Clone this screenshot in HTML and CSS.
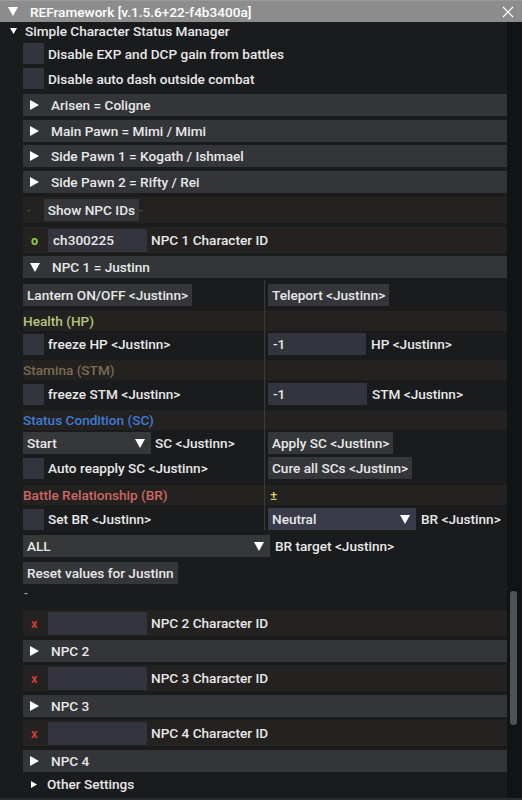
FILE: index.html
```html
<!DOCTYPE html>
<html lang="en">
<head>
    <meta charset="UTF-8">
    <meta name="viewport" content="width=device-width, initial-scale=1.0">
    <title>REFramework</title>
    <link rel="stylesheet" href="styles.css">
</head>
<body>
<div class="window">

    <!-- title bar -->
    <div class="titlebar">
        <svg class="title-arrow" width="10" height="9" viewBox="0 0 10 9"><polygon points="0,0 10,0 5,9"/></svg>
        <span class="title">REFramework [v.1.5.6+22-f4b3400a]</span>
        <svg class="close" width="12" height="12" viewBox="0 0 12 12"><path d="M1 1 L11 11 M11 1 L1 11"/></svg>
    </div>

    <div class="body">
        <div class="content">

            <div class="section-head">
                <svg width="7" height="6" viewBox="0 0 7 6"><polygon points="0,0 7,0 3.5,6"/></svg>
                <span>Simple Character Status Manager</span>
            </div>

            <div class="inner">
                <div class="check-row r-cb1"><span class="cb"></span><span>Disable EXP and DCP gain from battles</span></div>
                <div class="check-row r-cb2"><span class="cb"></span><span>Disable auto dash outside combat</span></div>

                <div class="node r-arisen"><svg class="tri" width="9" height="10" viewBox="0 0 9 10"><polygon points="0,0 9,5 0,10"/></svg><span>Arisen = Coligne</span></div>
                <div class="node r-main"><svg class="tri" width="9" height="10" viewBox="0 0 9 10"><polygon points="0,0 9,5 0,10"/></svg><span>Main Pawn = Mimi / Mimi</span></div>
                <div class="node r-side1"><svg class="tri" width="9" height="10" viewBox="0 0 9 10"><polygon points="0,0 9,5 0,10"/></svg><span>Side Pawn 1 = Kogath / Ishmael</span></div>
                <div class="node r-side2"><svg class="tri" width="9" height="10" viewBox="0 0 9 10"><polygon points="0,0 9,5 0,10"/></svg><span>Side Pawn 2 = Rifty / Rei</span></div>

                <div class="band r-show">
                    <span class="dim-dash first">-</span>
                    <span class="btn">Show NPC IDs</span>
                    <span class="dim-dash">-</span>
                </div>

                <div class="band id-row r-id1">
                    <span class="mark ok">o</span>
                    <span class="input id-input">ch300225</span>
                    <span>NPC 1 Character ID</span>
                </div>

                <div class="node r-npc1"><svg class="tri" width="10" height="9" viewBox="0 0 10 9"><polygon points="0,0 10,0 5,9"/></svg><span>NPC 1 = Justinn</span></div>

                <!-- two columns -->
                <div class="columns">
                    <div class="cell row-1"><span class="btn">Lantern ON/OFF &lt;Justinn&gt;</span></div>
                    <div class="cell right row-1"><span class="btn">Teleport &lt;Justinn&gt;</span></div>

                    <div class="cell band-cell row-gap5 hp">Health (HP)</div>
                    <div class="cell right band-cell row-gap5"></div>

                    <div class="cell row-2"><span class="cb"></span><span>freeze HP &lt;Justinn&gt;</span></div>
                    <div class="cell right row-2"><span class="input num">-1</span><span>HP &lt;Justinn&gt;</span></div>

                    <div class="cell band-cell row-gap5 stm">Stamina (STM)</div>
                    <div class="cell right band-cell row-gap5"></div>

                    <div class="cell row-3"><span class="cb"></span><span>freeze STM &lt;Justinn&gt;</span></div>
                    <div class="cell right row-3"><span class="input num num-stm">-1</span><span>STM &lt;Justinn&gt;</span></div>

                    <div class="cell band-cell row-gap5 sc">Status Condition (SC)</div>
                    <div class="cell right band-cell row-gap5"></div>

                    <div class="cell row-2">
                        <span class="combo combo-start"><span class="val">Start</span><svg width="10" height="9" viewBox="0 0 10 9"><polygon points="0,0 10,0 5,9"/></svg></span>
                        <span>SC &lt;Justinn&gt;</span>
                    </div>
                    <div class="cell right row-2"><span class="btn">Apply SC &lt;Justinn&gt;</span></div>

                    <div class="cell row-3"><span class="cb"></span><span>Auto reapply SC &lt;Justinn&gt;</span></div>
                    <div class="cell right row-3"><span class="btn">Cure all SCs &lt;Justinn&gt;</span></div>

                    <div class="cell band-cell row-gap6 br">Battle Relationship (BR)</div>
                    <div class="cell right band-cell row-gap6"><span class="pm">±</span></div>

                    <div class="cell row-3"><span class="cb"></span><span>Set BR &lt;Justinn&gt;</span></div>
                    <div class="cell right row-3">
                        <span class="combo combo-neutral"><span class="val">Neutral</span><svg width="10" height="9" viewBox="0 0 10 9"><polygon points="0,0 10,0 5,9"/></svg></span>
                        <span>BR &lt;Justinn&gt;</span>
                    </div>
                </div>

                <div class="line r-all">
                    <span class="combo combo-all"><span class="val">ALL</span><svg width="10" height="9" viewBox="0 0 10 9"><polygon points="0,0 10,0 5,9"/></svg></span>
                    <span>BR target &lt;Justinn&gt;</span>
                </div>

                <div class="line r-reset"><span class="btn">Reset values for Justinn</span></div>

                <div class="sep-dash">-</div>

                <div class="band id-row r-id2">
                    <span class="mark bad">x</span>
                    <span class="input id-input"></span>
                    <span>NPC 2 Character ID</span>
                </div>
                <div class="node r-npc"><svg class="tri" width="9" height="10" viewBox="0 0 9 10"><polygon points="0,0 9,5 0,10"/></svg><span>NPC 2</span></div>

                <div class="band id-row r-idn">
                    <span class="mark bad">x</span>
                    <span class="input id-input"></span>
                    <span>NPC 3 Character ID</span>
                </div>
                <div class="node r-npc"><svg class="tri" width="9" height="10" viewBox="0 0 9 10"><polygon points="0,0 9,5 0,10"/></svg><span>NPC 3</span></div>

                <div class="band id-row r-idn">
                    <span class="mark bad">x</span>
                    <span class="input id-input"></span>
                    <span>NPC 4 Character ID</span>
                </div>
                <div class="node r-npc"><svg class="tri" width="9" height="10" viewBox="0 0 9 10"><polygon points="0,0 9,5 0,10"/></svg><span>NPC 4</span></div>

                <div class="sub-head">
                    <svg width="6" height="7" viewBox="0 0 6 7"><polygon points="0,0 6,3.5 0,7"/></svg>
                    <span>Other Settings</span>
                </div>
            </div>
        </div>

        <div class="scrollbar"><div class="thumb"></div></div>
    </div>
</div>
</body>
</html>
```

FILE: styles.css
```css
body {
    margin: 0;
    background: #1a1b1d;
    font-family: Roboto, "Liberation Sans", sans-serif;
    font-size: 13.6px;
    font-weight: 500;
    color: #e8e8e8;
}

.window {
    width: 522px;
    height: 800px;
    display: flex;
    flex-direction: column;
    overflow: hidden;
}

/* title bar */
.titlebar {
    height: 22px;
    flex: none;
    display: flex;
    align-items: center;
    background: #8d8d8d;
    border-top: 1px solid #9a9a9a;
    box-sizing: border-box;
    color: #fff;
}

.title-arrow {
    fill: #fff;
    margin-left: 8px;
    margin-right: 12px;
}

.title {
    flex: 1;
}

.close {
    stroke: #fff;
    stroke-width: 1.2;
    margin-right: 8px;
}

.body {
    flex: 1;
    display: flex;
    border-bottom: 2px solid #2a2b2d;
}

.content {
    width: 507px;
}

.scrollbar {
    width: 15px;
    background: #121315;
}

.thumb {
    margin: 569px 0 0 3px;
    width: 7px;
    height: 134px;
    background: #505152;
    border-radius: 3px;
}

/* section header */
.section-head {
    height: 18px;
    display: flex;
    align-items: center;
}

.section-head svg {
    fill: #fff;
    margin-left: 10px;
    margin-right: 8px;
}

.inner {
    padding-left: 23px;
    display: flex;
    flex-direction: column;
}

/* checkbox rows */
.check-row {
    height: 21px;
    display: flex;
    align-items: center;
}

.cb {
    width: 21px;
    height: 21px;
    flex: none;
    background: #33343d;
    margin-right: 4px;
}

/* tree nodes */
.node {
    height: 22px;
    display: flex;
    align-items: center;
    background: #333538;
}

.node .tri {
    fill: #fff;
    margin-left: 7px;
    margin-right: 12px;
}

/* darker bands */
.band {
    height: 26px;
    display: flex;
    align-items: center;
    background: #232220;
}

.btn {
    height: 22px;
    display: inline-flex;
    align-items: center;
    padding: 0 4px;
    background: #353639;
    white-space: nowrap;
}

.input {
    height: 23px;
    display: inline-flex;
    align-items: center;
    padding-left: 5px;
    box-sizing: border-box;
    background: #33343e;
}

.dim-dash {
    color: #3d5c3b;
    font-size: 11px;
    margin: 0 13px 0 0;
}

.dim-dash.first {
    margin-left: 4px;
    margin-right: 13px;
}

.id-row .mark {
    width: 25px;
    padding-left: 8px;
    box-sizing: border-box;
    font-weight: 700;
    font-size: 12.5px;
}

.mark.ok {
    color: #8ed23f;
}

.mark.bad {
    color: #d23a32;
}

.id-input {
    width: 99px;
    margin-right: 4px;
}

/* vertical positions */
.r-cb1 { margin-top: 3px; }
.r-cb2 { margin-top: 4px; }
.r-arisen { margin-top: 5px; }
.r-main { margin-top: 4px; }
.r-side1 { margin-top: 3px; }
.r-side2 { margin-top: 4px; }
.r-show { margin-top: 4px; }
.r-id1 { margin-top: 4px; }
.r-npc1 { margin-top: 3px; }
.r-all { margin-top: 5px; }
.r-reset { margin-top: 5px; }
.r-id2 { margin-top: 8px; }
.r-idn { margin-top: 3px; }
.r-npc { margin-top: 4px; }

/* columns */
.columns {
    margin-top: 2px;
    padding: 4px 0 0;
    display: grid;
    grid-template-columns: 241px 1fr;
    column-gap: 1px;
    background: linear-gradient(#3a3b3d, #3a3b3d) no-repeat 241px 0 / 1px 100%;
}

.cell {
    height: 22px;
    display: flex;
    align-items: center;
}

.cell.right {
    padding-left: 3px;
}

.band-cell {
    height: 20px;
    background: #232220;
}

.row-gap5 { margin-top: 5px; }
.row-gap6 { margin-top: 6px; }
.row-2 { margin-top: 2px; }
.row-3 { margin-top: 3px; }

.hp { color: #b6c47d; }
.stm { color: #7a6c50; }
.sc { color: #3f7ad6; }
.br { color: #cd6764; }

.pm {
    color: #d8cf5c;
    margin-left: 2px;
}

.num {
    width: 98px;
    height: 22px;
    margin-right: 5px;
}

.num-stm {
    width: 99px;
}

/* combos */
.combo {
    height: 22px;
    display: inline-flex;
    align-items: center;
    padding-left: 4px;
    box-sizing: border-box;
    background: #363739;
    margin-right: 4px;
}

.combo .val {
    flex: 1;
}

.combo svg {
    fill: #fff;
    margin-right: 6px;
}

.combo-start { width: 128px; }
.combo-neutral { width: 148px; background: #393a4a; margin-right: 5px; }
.combo-all { width: 247px; margin-right: 5px; }

.line {
    height: 22px;
    display: flex;
    align-items: center;
}

.sep-dash {
    height: 16px;
    margin-top: 2px;
    line-height: 16px;
    color: #b0b0b0;
    font-size: 11px;
    padding-left: 1px;
}

.sub-head {
    margin-top: 3px;
    height: 18px;
    display: flex;
    align-items: center;
}

.sub-head svg {
    fill: #fff;
    margin-left: 8px;
    margin-right: 10px;
}
```
